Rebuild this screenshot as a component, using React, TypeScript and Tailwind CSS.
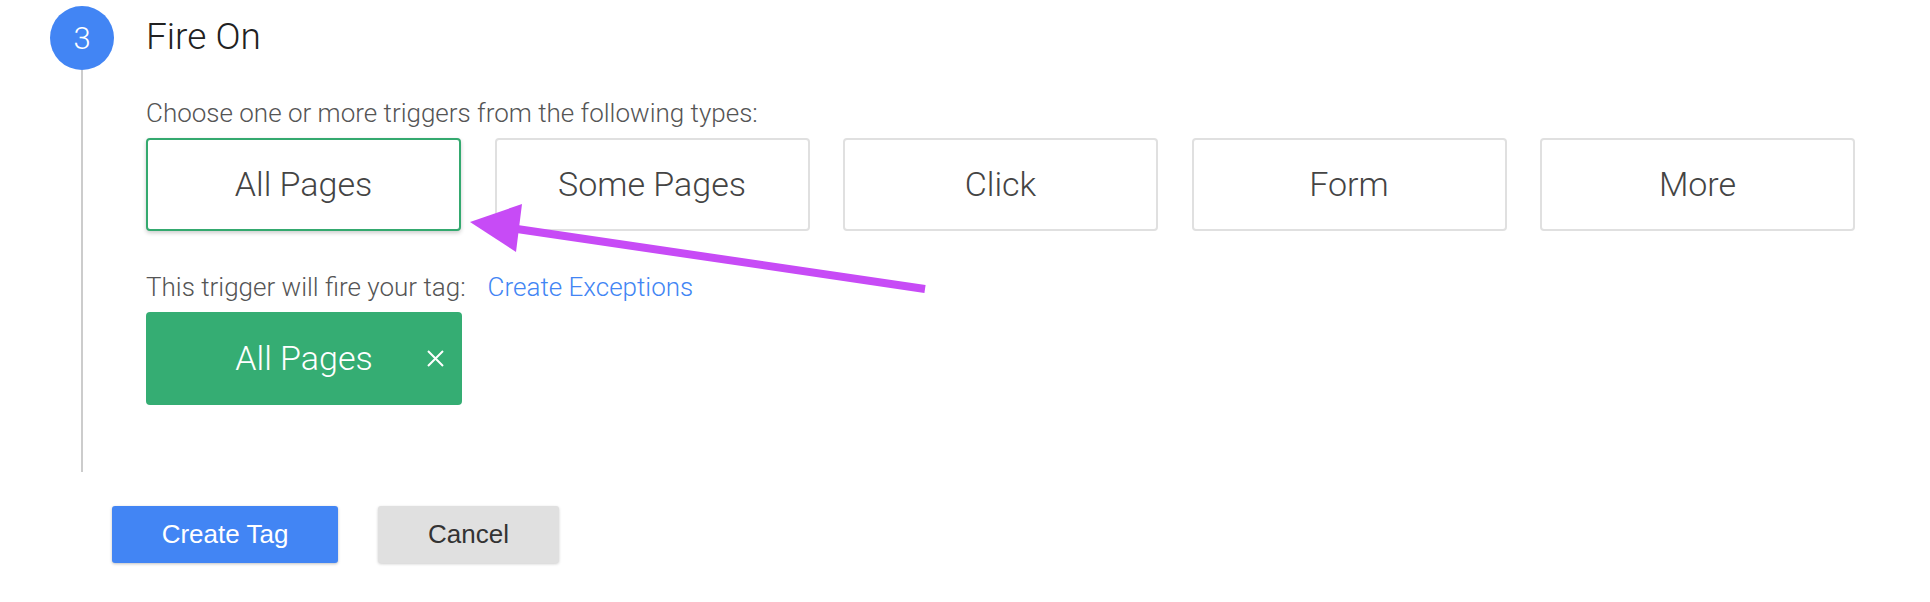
const triggers = ['All Pages', 'Some Pages', 'Click', 'Form', 'More']

function Arrow() {
  return (
    <svg className="absolute left-0 top-0 pointer-events-none" width="1930" height="602">
      <line x1="517" y1="229" x2="925" y2="289" stroke="#c74bf6" strokeWidth="8" />
      <polygon points="470,222 522,204 516,252" fill="#c74bf6" />
    </svg>
  )
}

export default function App() {
  return (
    <div className="relative w-[1930px] h-[602px] bg-white overflow-hidden font-['Roboto',sans-serif]">
      <div className="flex">
        <div className="flex flex-col items-center w-[64px] ml-[50px] pt-[6px]">
          <div className="flex items-center justify-center w-[64px] h-[64px] shrink-0 rounded-full bg-[#4285f4] text-white text-[31px] font-light leading-none">
            3
          </div>
          <div className="w-[2px] flex-1 bg-[#cccccc]" />
        </div>

        <div className="ml-[32px] pb-[67px]">
          <h2 className="mt-[15px] text-[37px] leading-[44px] font-light text-[#212121]">Fire On</h2>
          <p className="mt-[38px] text-[26px] leading-[32px] font-light text-[#555]">
            Choose one or more triggers from the following types:
          </p>
          <div className="mt-[9px] flex gap-[33.5px]">
            {triggers.map((t, i) => (
              <button
                key={t}
                className={
                  i === 0
                    ? 'w-[315px] h-[93px] rounded-[4px] border-2 border-[#34a96f] bg-white shadow-[0_2px_4px_rgba(0,0,0,0.2)] text-[34px] font-light text-[#444]'
                    : 'w-[315px] h-[93px] rounded-[4px] border-2 border-[#e0e0e0] bg-white text-[34px] font-light text-[#444]'
                }
              >
                {t}
              </button>
            ))}
          </div>
          <div className="mt-[40px] flex items-center text-[26px] leading-[32px] font-light">
            <span className="text-[#555]">This trigger will fire your tag:</span>
            <a className="ml-[22px] text-[#4285f4]">Create Exceptions</a>
          </div>
          <div className="mt-[9px] relative flex items-center justify-center w-[316px] h-[93px] rounded-[4px] bg-[#35ad73] text-white text-[34px] font-light">
            All Pages
            <svg className="absolute right-[18px] top-[38px]" width="17" height="17" viewBox="0 0 17 17">
              <path d="M1 1 L16 16 M16 1 L1 16" stroke="white" strokeWidth="2" />
            </svg>
          </div>
        </div>
      </div>

      <div className="mt-[34px] ml-[112px] flex gap-[40px] font-['Liberation_Sans',Arial,sans-serif] text-[26px]">
        <button className="w-[226px] h-[57px] rounded-[3px] bg-[#4285f4] text-white shadow-[0_1px_3px_rgba(0,0,0,0.25)]">
          Create Tag
        </button>
        <button className="w-[181px] h-[57px] rounded-[3px] bg-[#e0e0e0] text-[#333] shadow-[0_1px_3px_rgba(0,0,0,0.2)]">
          Cancel
        </button>
      </div>

      <Arrow />
    </div>
  )
}
